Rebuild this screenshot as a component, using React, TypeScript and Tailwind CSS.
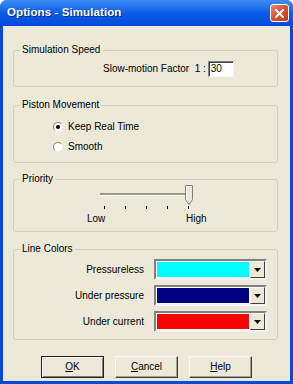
import React from 'react';

// Windows XP style "Options - Simulation" dialog

function Group({ title, className, children }: { title: string; className: string; children: React.ReactNode }) {
  return (
    <div className={`relative ml-[10px] mr-[12px] rounded-[3px] border border-[#D0D0BF] ${className}`}>
      <span className="absolute -top-[7px] left-[6px] bg-[#ECE9D8] px-[2px] text-[10px] leading-[12px] text-black">
        {title}
      </span>
      {children}
    </div>
  );
}

function Radio({ checked, label }: { checked?: boolean; label: string }) {
  return (
    <div className="flex h-[14px] items-center gap-[5px]">
      <span className="flex h-[10px] w-[10px] items-center justify-center rounded-full border border-t-[#8A8A80] border-l-[#8A8A80] border-b-[#F4F4F0] border-r-[#F4F4F0] bg-white">
        {checked && <span className="h-[4px] w-[4px] rounded-full bg-black" />}
      </span>
      <span className="text-[10px] leading-[12px]">{label}</span>
    </div>
  );
}

function ColorCombo({ label, color }: { label: string; color: string }) {
  return (
    <div className="flex items-center">
      <span className="w-[130px] text-right text-[10px] leading-[12px]">{label}</span>
      <div className="ml-[10px] flex h-[21px] w-[113px] border-2 border-t-[#808080] border-l-[#808080] border-b-[#F4F4F0] border-r-[#F4F4F0] bg-white">
        <div className="flex-1 p-[1px]">
          <div className="h-full w-full" style={{ backgroundColor: color }} />
        </div>
        <div className="flex w-[15px] items-center justify-center border border-t-[#F8F8F4] border-l-[#F8F8F4] border-b-[#404040] border-r-[#404040] bg-[#ECE9D8]">
          <svg width="7" height="4" viewBox="0 0 7 4">
            <path d="M0 0h7L3.5 4z" fill="#000" />
          </svg>
        </div>
      </div>
    </div>
  );
}

function Button({ label, mnemonic, isDefault }: { label: string; mnemonic: number; isDefault?: boolean }) {
  return (
    <button
      className={`flex h-[22px] w-[63px] items-center justify-center bg-[#ECE9D8] text-[10px] leading-[12px] text-black ${
        isDefault
          ? 'border border-[#202020] shadow-[inset_1px_1px_0_#fff,inset_-1px_-1px_0_#808080]'
          : 'border border-t-[#F8F8F4] border-l-[#F8F8F4] border-b-[#404040] border-r-[#404040] shadow-[inset_-1px_-1px_0_#A0A094]'
      }`}
    >
      {label.slice(0, mnemonic)}
      <span className="underline">{label[mnemonic]}</span>
      {label.slice(mnemonic + 1)}
    </button>
  );
}

export default function App() {
  const ticks = [0, 1, 2, 3, 4];
  return (
    <div className="h-[384px] w-[293px] bg-white font-['Liberation_Sans',Arial,sans-serif] text-black">
      <div className="flex h-full flex-col overflow-hidden rounded-t-[7px] bg-[#0A48D8]">
        <div className="flex h-[26px] items-center justify-between bg-gradient-to-b from-[#3D8CF5] via-[#0A5DE8] to-[#034ADB] pl-[7px] pr-[4px]">
          <span className="text-[11.5px] font-bold tracking-[0.1px] text-white [text-shadow:1px_1px_0_#0A2B88]">
            Options - Simulation
          </span>
          <button className="flex h-[18px] w-[19px] items-center justify-center rounded-[3px] border border-white bg-gradient-to-br from-[#E8896A] via-[#D6532F] to-[#BE3A17]">
            <svg width="9" height="9" viewBox="0 0 9 9">
              <path d="M1 1l7 7M8 1L1 8" stroke="#fff" strokeWidth="2" strokeLinecap="square" />
            </svg>
          </button>
        </div>

        <div className="mx-[3px] mb-[3px] flex flex-1 flex-col bg-[#ECE9D8]">
          <Group title="Simulation Speed" className="mt-[24px] h-[37px]">
            <div className="flex items-center pl-[89px] pt-[10px]">
              <span className="text-[10px] leading-[12px]">Slow-motion Factor&nbsp; 1 :</span>
              <div className="ml-[2px] h-[16px] w-[26px] border border-t-[#808080] border-l-[#808080] border-b-[#F4F4F0] border-r-[#F4F4F0] bg-white pl-[2px] text-[10px] leading-[14px] shadow-[inset_1px_1px_0_#404040]">
                30
              </div>
            </div>
          </Group>

          <Group title="Piston Movement" className="mt-[18px] h-[58px]">
            <div className="flex flex-col gap-[6px] pl-[39px] pt-[14px]">
              <Radio checked label="Keep Real Time" />
              <Radio label="Smooth" />
            </div>
          </Group>

          <Group title="Priority" className="mt-[16px] h-[53px]">
            <div className="ml-[86px] w-[100px]">
              <div className="relative mt-[5px] h-[20px]">
                <div className="absolute left-0 top-[8px] h-[3px] w-[89px] border-b border-b-white bg-[#9A9A8C]" />
                <svg className="absolute left-[85px] top-0" width="8" height="20" viewBox="0 0 8 20">
                  <path d="M0.5 0.5h7v14l-3.5 5l-3.5-5z" fill="#ECE9D8" stroke="#808080" />
                  <path d="M1.5 14V1.5h5" fill="none" stroke="#fff" />
                </svg>
              </div>
              <div className="ml-[4px] mt-[1px] flex h-[3px] gap-[20px]">
                {ticks.map((t) => (
                  <span key={t} className="h-[3px] w-[1px] bg-black" />
                ))}
              </div>
            </div>
            <div className="ml-[73px] mt-[4px] flex text-[10px] leading-[12px]">
              <span className="w-[99px]">Low</span>
              <span>High</span>
            </div>
          </Group>

          <Group title="Line Colors" className="mt-[17px] h-[91px]">
            <div className="flex flex-col gap-[5px] pt-[9px]">
              <ColorCombo label="Pressureless" color="#00FFFF" />
              <ColorCombo label="Under pressure" color="#000080" />
              <ColorCombo label="Under current" color="#FF0000" />
            </div>
          </Group>

          <div className="ml-[38px] mt-[16px] flex gap-[11px]">
            <Button label="OK" mnemonic={0} isDefault />
            <Button label="Cancel" mnemonic={0} />
            <Button label="Help" mnemonic={0} />
          </div>
        </div>
      </div>
    </div>
  );
}
